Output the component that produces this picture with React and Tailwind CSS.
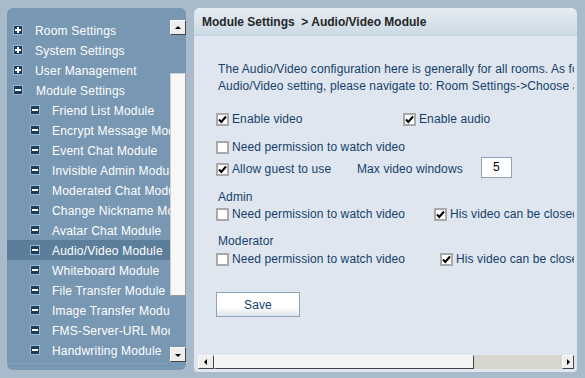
import React from 'react';

const FONT = { fontFamily: '"Liberation Sans", Arial, sans-serif' };

// tree node toggle icon (plus / minus)
const NodeIcon = ({ open }) => (
  <svg width="10" height="10" viewBox="0 0 10 10" className="shrink-0">
    <rect x="0.5" y="0.5" width="9" height="9" fill="#1a3b5f" stroke="#9db4c8" strokeWidth="1" />
    <rect x="2" y="4" width="6" height="2" fill="#ffffff" />
    {!open && <rect x="4" y="2" width="2" height="6" fill="#ffffff" />}
  </svg>
);

const Arrow = ({ dir }) => {
  const pts = {
    up: '1,5 4,2 7,5',
    down: '1,3 4,6 7,3',
    left: '5,1 2,4 5,7',
    right: '3,1 6,4 3,7',
  }[dir];
  return (
    <svg width="8" height="8" viewBox="0 0 8 8">
      <polygon points={pts} fill="#000" />
    </svg>
  );
};

const ScrollBtn = ({ dir, className = '' }) => (
  <div
    className={`flex items-center justify-center bg-[#eeeeee] border border-t-[#fafafa] border-l-[#fafafa] border-r-[#444] border-b-[#444] ${className}`}
  >
    <Arrow dir={dir} />
  </div>
);

const Checkbox = ({ checked }) => (
  <div className="w-[13px] h-[13px] shrink-0 border-2 border-[#a9a9a9] bg-white flex items-center justify-center">
    {checked && (
      <svg width="9" height="9" viewBox="0 0 9 9">
        <path d="M1 4.5 L3.3 7 L8 1.5" fill="none" stroke="#000" strokeWidth="2" />
      </svg>
    )}
  </div>
);

const Check = ({ checked, label }) => (
  <div className="flex items-center gap-[3px] whitespace-nowrap">
    <Checkbox checked={checked} />
    <span>{label}</span>
  </div>
);

const tree = [
  { label: 'Room Settings', level: 0, open: false },
  { label: 'System Settings', level: 0, open: false },
  { label: 'User Management', level: 0, open: false },
  { label: 'Module Settings', level: 0, open: true },
  { label: 'Friend List Module', level: 1 },
  { label: 'Encrypt Message Module', level: 1 },
  { label: 'Event Chat Module', level: 1 },
  { label: 'Invisible Admin Module', level: 1 },
  { label: 'Moderated Chat Module', level: 1 },
  { label: 'Change Nickname Module', level: 1 },
  { label: 'Avatar Chat Module', level: 1 },
  { label: 'Audio/Video Module', level: 1, selected: true },
  { label: 'Whiteboard Module', level: 1 },
  { label: 'File Transfer Module', level: 1 },
  { label: 'Image Transfer Module', level: 1 },
  { label: 'FMS-Server-URL Module', level: 1 },
  { label: 'Handwriting Module', level: 1 },
];

const Sidebar = () => (
  <div className="mt-[8px] ml-[7px] w-[179px] h-[362px] rounded-[6px] bg-[#7897b2] flex overflow-hidden">
    <div className="flex-1 min-w-0 pt-[12px] flex flex-col">
      {tree.map((item) => (
        <div
          key={item.label}
          className={`h-[20px] shrink-0 flex items-center whitespace-nowrap overflow-hidden text-white text-[12px] tracking-[0.2px] ${
            item.selected ? 'bg-[#5d7e9b]' : ''
          } ${item.level === 0 ? 'pl-[6px]' : 'pl-[23px]'}`}
        >
          <NodeIcon open={item.level === 1 || item.open} />
          <span className={`pt-[2px] ${item.open ? 'ml-[13px]' : 'ml-[12px]'}`}>{item.label}</span>
        </div>
      ))}
      <div className="mt-[3px] mr-[2px] border-b border-dotted border-[#8eaac2]" />
    </div>
    {/* vertical scrollbar */}
    <div className="w-[16px] shrink-0 pt-[12px] flex flex-col">
      <ScrollBtn dir="up" className="h-[15px]" />
      <div className="mt-[38px] h-[223px] bg-[#f7f7f7] border-l border-t border-[#d0d0d0] border-r border-b border-r-[#9a9a9a] border-b-[#9a9a9a]" />
      <div className="flex-1" />
      <ScrollBtn dir="down" className="h-[15px] mb-[8px]" />
    </div>
  </div>
);

const Content = () => (
  <div className="mt-[8px] ml-[8px] w-[383px] h-[364px] rounded-t-[6px] rounded-b-[4px] bg-[#dfe6ef] flex flex-col overflow-hidden">
    <div className="h-[28px] shrink-0 flex items-center pl-[8px] bg-gradient-to-b from-[#e6edf3] to-[#ccd9e4] border-b border-[#c6d3de] text-[12px] font-bold text-[#262626] whitespace-pre">
      {'Module Settings  > Audio/Video Module'}
    </div>
    <div className="flex-1 min-h-0 ml-[3px] mr-[3px] border-l border-dotted border-[#f4f7fa] overflow-hidden">
      <div className="pl-[18px] text-[12px] tracking-[0.1px] text-[#163f6b] flex flex-col whitespace-nowrap">
        <div className="mt-[25px] ml-[2px] leading-[17px]">
          <div>The Audio/Video configuration here is generally for all rooms. As for room specific</div>
          <div>Audio/Video setting, please navigate to: Room Settings-&gt;Choose a room</div>
        </div>

        <div className="mt-[16px] h-[16px] flex items-center">
          <div className="w-[187px] shrink-0">
            <Check checked label="Enable video" />
          </div>
          <Check checked label="Enable audio" />
        </div>

        <div className="mt-[12px] h-[16px] flex items-center">
          <Check label="Need permission to watch video" />
        </div>

        <div className="mt-[6px] h-[16px] flex items-center">
          <div className="w-[141px] shrink-0">
            <Check checked label="Allow guest to use" />
          </div>
          <div className="w-[124px] shrink-0">Max video windows</div>
          <div className="w-[31px] h-[21px] -mt-[4px] shrink-0 bg-white border border-[#8ea5b8] flex items-center justify-center text-black">
            5
          </div>
        </div>

        <div className="mt-[12px] h-[16px] ml-[2px] flex items-center">Admin</div>
        <div className="mt-[1px] h-[16px] flex items-center">
          <div className="w-[218px] shrink-0">
            <Check label="Need permission to watch video" />
          </div>
          <div className="shrink-0">
            <Check checked label="His video can be closed by others" />
          </div>
        </div>

        <div className="mt-[11px] h-[16px] ml-[2px] flex items-center">Moderator</div>
        <div className="mt-[2px] h-[16px] flex items-center">
          <div className="w-[224px] shrink-0">
            <Check label="Need permission to watch video" />
          </div>
          <div className="shrink-0">
            <Check checked label="His video can be closed by others" />
          </div>
        </div>

        <button className="mt-[25px] w-[84px] h-[25px] bg-gradient-to-b from-white from-60% to-[#dde4ec] border border-[#8ea5b8] text-[#163f6b] text-[12px] flex items-center justify-center">
          Save
        </button>
      </div>
    </div>
    {/* horizontal scrollbar */}
    <div className="h-[14px] shrink-0 ml-[4px] mr-[3px] mb-[3px] flex">
      <ScrollBtn dir="left" className="w-[16px]" />
      <div className="w-[260px] bg-[#f3f3f3] border border-t-[#fafafa] border-l-[#fafafa] border-r-[#444] border-b-[#444]" />
      <div className="flex-1 bg-[#d6d6ce]" />
      <ScrollBtn dir="right" className="w-[12px]" />
    </div>
  </div>
);

export default function App() {
  return (
    <div style={FONT} className="w-[585px] h-[378px] bg-[#a9bacb] flex items-start overflow-hidden">
      <Sidebar />
      <Content />
    </div>
  );
}
